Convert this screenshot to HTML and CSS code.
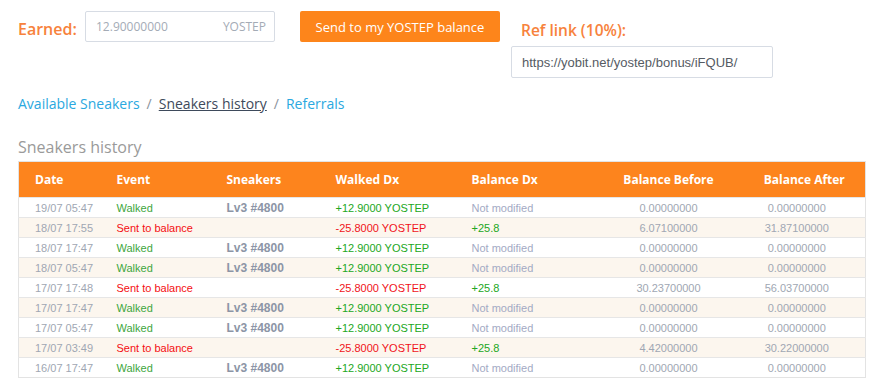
FILE: index.html
```html
<!DOCTYPE html>
<html>
<head>
<meta charset="utf-8">
<link rel="stylesheet" href="styles.css">
</head>
<body>
<div class="page">
  <div class="top">
    <div class="earned-label">Earned:</div>
    <div class="amount-box"><span class="amount">12.90000000</span><span class="unit">YOSTEP</span></div>
    <button class="send-btn">Send to my YOSTEP balance</button>
    <div class="ref">
      <div class="ref-label">Ref link (10%):</div>
      <div class="ref-box">https://yobit.net/yostep/bonus/iFQUB/</div>
    </div>
  </div>
  <div class="crumbs">
    <a class="crumb">Available Sneakers</a><span class="sep">/</span><a class="crumb active">Sneakers history</a><span class="sep">/</span><a class="crumb">Referrals</a>
  </div>
  <h2 class="title">Sneakers history</h2>
  <table class="history">
    <colgroup>
      <col class="c1"><col class="c2"><col class="c3"><col class="c4"><col class="c5"><col class="c6"><col class="c7">
    </colgroup>
    <thead>
      <tr><th>Date</th><th>Event</th><th>Sneakers</th><th>Walked Dx</th><th>Balance Dx</th><th class="ctr">Balance Before</th><th class="ctr last">Balance After</th></tr>
    </thead>
    <tbody>
      <tr><td class="date">19/07 05:47</td><td class="walk">Walked</td><td class="snk">Lv3 #4800</td><td class="plus">+12.9000 YOSTEP</td><td class="nm">Not modified</td><td class="num">0.00000000</td><td class="num last">0.00000000</td></tr>
      <tr><td class="date">18/07 17:55</td><td class="sent">Sent to balance</td><td class="snk"></td><td class="minus">-25.8000 YOSTEP</td><td class="plus">+25.8</td><td class="num">6.07100000</td><td class="num last">31.87100000</td></tr>
      <tr><td class="date">18/07 17:47</td><td class="walk">Walked</td><td class="snk">Lv3 #4800</td><td class="plus">+12.9000 YOSTEP</td><td class="nm">Not modified</td><td class="num">0.00000000</td><td class="num last">0.00000000</td></tr>
      <tr><td class="date">18/07 05:47</td><td class="walk">Walked</td><td class="snk">Lv3 #4800</td><td class="plus">+12.9000 YOSTEP</td><td class="nm">Not modified</td><td class="num">0.00000000</td><td class="num last">0.00000000</td></tr>
      <tr><td class="date">17/07 17:48</td><td class="sent">Sent to balance</td><td class="snk"></td><td class="minus">-25.8000 YOSTEP</td><td class="plus">+25.8</td><td class="num">30.23700000</td><td class="num last">56.03700000</td></tr>
      <tr><td class="date">17/07 17:47</td><td class="walk">Walked</td><td class="snk">Lv3 #4800</td><td class="plus">+12.9000 YOSTEP</td><td class="nm">Not modified</td><td class="num">0.00000000</td><td class="num last">0.00000000</td></tr>
      <tr><td class="date">17/07 05:47</td><td class="walk">Walked</td><td class="snk">Lv3 #4800</td><td class="plus">+12.9000 YOSTEP</td><td class="nm">Not modified</td><td class="num">0.00000000</td><td class="num last">0.00000000</td></tr>
      <tr><td class="date">17/07 03:49</td><td class="sent">Sent to balance</td><td class="snk"></td><td class="minus">-25.8000 YOSTEP</td><td class="plus">+25.8</td><td class="num">4.42000000</td><td class="num last">30.22000000</td></tr>
      <tr><td class="date">16/07 17:47</td><td class="walk">Walked</td><td class="snk">Lv3 #4800</td><td class="plus">+12.9000 YOSTEP</td><td class="nm">Not modified</td><td class="num">0.00000000</td><td class="num last">0.00000000</td></tr>
    </tbody>
  </table>
</div>
</body>
</html>
```
FILE: styles.css
```css
html, body {
  margin: 0;
  padding: 0;
  background: #ffffff;
}
.page {
  padding: 11px 10px 0 18px;
  font-family: "Open Sans", sans-serif;
}
.top {
  display: flex;
  align-items: flex-start;
  height: 67px;
}
.earned-label {
  color: #f7823c;
  font-size: 16px;
  font-weight: 600;
  line-height: 20px;
  margin-top: 8px;
  width: 67px;
}
.amount-box {
  box-sizing: border-box;
  width: 190px;
  height: 31px;
  border: 1px solid #d7dce4;
  border-radius: 2px;
  display: flex;
  align-items: center;
  justify-content: space-between;
  padding: 0 8px 0 10px;
  color: #a4abb6;
  font-size: 12px;
}
.send-btn {
  margin-left: 25px;
  width: 200px;
  height: 31px;
  border: none;
  border-radius: 2px;
  background: #fd851b;
  color: #ffffff;
  font-family: "Open Sans", sans-serif;
  font-size: 13px;
  font-weight: 500;
  padding: 0;
}
.ref {
  margin-left: 11px;
  display: flex;
  flex-direction: column;
}
.ref-label {
  color: #f7823c;
  font-size: 15.5px;
  font-weight: 600;
  line-height: 20px;
  margin-top: 9px;
  padding-left: 10px;
}
.ref-box {
  box-sizing: border-box;
  margin-top: 6px;
  width: 262px;
  height: 32px;
  border: 1px solid #d7dce4;
  border-radius: 2px;
  padding: 0 10px;
  display: flex;
  align-items: center;
  font-family: "Liberation Sans", Arial, sans-serif;
  font-size: 13px;
  color: #555b63;
}
.crumbs {
  margin-top: 16px;
  font-size: 14px;
  line-height: 20px;
}
.crumb {
  color: #2aa8e0;
}
.crumb.active {
  color: #3e4a5b;
  text-decoration: underline;
}
.sep {
  color: #8a929c;
  margin: 0 7px;
}
.title {
  margin: 22px 0 0 0;
  font-size: 16px;
  font-weight: 400;
  color: #9a9a9a;
  line-height: 22px;
}
.history {
  margin-top: 3px;
  width: 847px;
  border-collapse: collapse;
  table-layout: fixed;
  border: 1px solid #e3e3e3;
}
.c1 { width: 82px; }
.c2 { width: 110px; }
.c3 { width: 109px; }
.c4 { width: 136px; }
.c5 { width: 145px; }
.c6 { width: 136px; }
.c7 { width: 129px; }
.history th {
  background: #fd841d;
  color: #ffffff;
  font-family: "Open Sans", sans-serif;
  font-size: 12px;
  font-weight: 700;
  height: 35px;
  text-align: left;
  padding: 0 0 0 16px;
  border-top: 1px solid #e3e3e3;
}
.history th.ctr {
  text-align: center;
  padding: 0;
}
.history th.last {
  padding-left: 7px;
}
.history td {
  height: 19px;
  padding: 0 0 0 16px;
  border-top: 1px solid #e6e6e6;
  font-family: "Liberation Sans", Arial, sans-serif;
  font-size: 11px;
  white-space: nowrap;
}
.history tbody tr:nth-child(even) td {
  background: #fcf6ee;
}
.history td.num {
  text-align: center;
  padding: 0;
  color: #a0a7b3;
}
.history td.num.last {
  padding-right: 8px;
}
.date { color: #a0a7b3; }
.walk { color: #3ea640; }
.sent { color: #f40f12; }
.snk {
  color: #8c95a6;
  font-weight: 700;
  font-size: 12px !important;
}
.plus { color: #22a722; }
.minus { color: #f0141a; }
.nm { color: #a3aac4; }
```
